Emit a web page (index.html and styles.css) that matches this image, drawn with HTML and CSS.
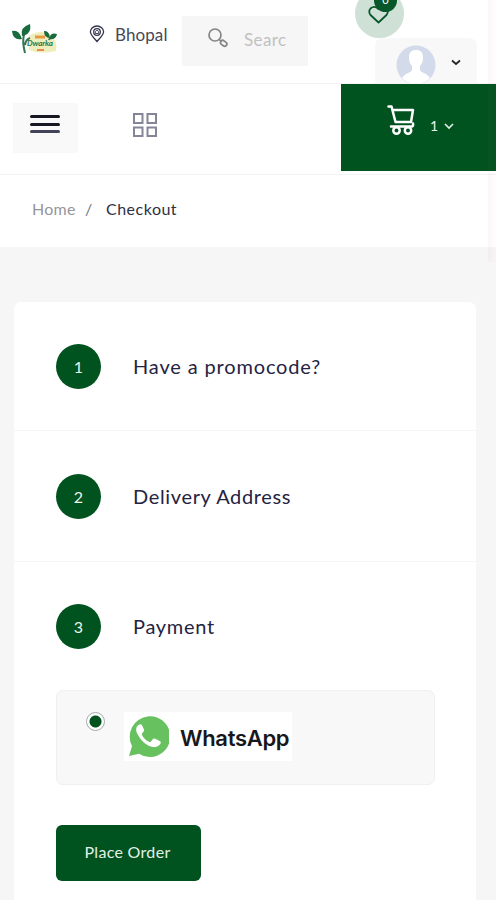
FILE: index.html
```
<!DOCTYPE html>
<html lang="en">
<head>
<meta charset="utf-8">
<meta name="viewport" content="width=device-width, initial-scale=1">
<title>Checkout</title>
<link rel="stylesheet" href="styles.css">
</head>
<body>
<header class="topbar">
  <a class="brand" href="#">
    <svg width="46" height="32" viewBox="0 0 46 32">
      <path d="M17 13 Q27 6 38 11 Q46 17 44 28 Q29 32 17 27Z" fill="#f0edbd"/>
      <path d="M13 30 Q10 18 12 12 M13 22 Q14 16 18 15 M37 17 Q39 12 42 12" fill="none" stroke="#347650" stroke-width="2"/>
      <path d="M0 8 Q7 6 10 16 Q1 18 0 8Z M10 13 Q8 4 18 1 Q20 11 10 13Z M32 8 Q37 7 38 15 Q32 15 32 8Z M38 16 Q38 9 45 11 Q44 17 38 16Z" fill="#176b3c"/>
      <path d="M23 14H33" stroke="#e39b43" stroke-width="3"/>
      <path d="M25 27H32" stroke="#e58b50" stroke-width="2"/>
      <text class="brand-text" x="15" y="23" textLength="26">Dwarka</text>
    </svg>
  </a>
  <div class="location">
    <svg width="16" height="18" viewBox="0 0 16 18" fill="none" stroke="#34344e" stroke-width="1.3"><path d="M8 16.5C5 13 1.400 10 1.400 6.800a6.600 5.800 0 0 1 13.200 0C14.600 10 11 13 8 16.500Z"/><circle cx="8" cy="7" r="3.300"/><path d="M6.400 8.500V6.400L8 5.200l1.600 1.200v2.100z" stroke-width=".9"/></svg>
    <span>Bhopal</span>
  </div>
  <div class="search">
    <svg width="20" height="20" viewBox="0 0 20 20" fill="none" stroke="#858585" stroke-width="1.7"><circle cx="7" cy="7" r="6"/><path d="M11 11.300l2.300 2.200"/><rect x="12.300" y="13.100" width="6.800" height="4.400" rx="2.200" transform="rotate(38 15.700 15.300)"/></svg>
    <span>Searc</span>
  </div>
  <div class="wish">
    <svg width="24" height="24" viewBox="0 0 24 24" fill="none" stroke="#07572a" stroke-width="1.800" stroke-linejoin="round"><path d="M11.500 21.500L3.500 14Q1 10.500 3.500 7.500Q7.500 4 11.500 8Q16 4 19.500 7.500Q22 10.500 19.500 14Z"/></svg>
    <span class="wish-count">0</span>
  </div>
  <div class="account">
    <svg width="40" height="40" viewBox="0 0 40 40"><circle cx="20" cy="20" r="19.500" fill="#d3dae9"/><path d="M20 5c-5 0-7.300 3-7 8 0 4 1.500 6 3 8v4c-1 3-7 3-10 8a19.500 19.500 0 0 0 28 0c-3-5-9-5-10-8v-4c1.500-2 3-4 3-8 .3-5-2-8-7-8Z" fill="#fff"/></svg>
    <svg width="10" height="7" viewBox="0 0 10 7" fill="none" stroke="#222" stroke-width="1.700"><path d="M1 1.500l4 3.500 4-3.500"/></svg>
  </div>
</header>
<nav class="navbar">
  <button class="menu" aria-label="Menu"><i></i><i></i><i></i></button>
  <svg class="apps" width="24" height="24" viewBox="0 0 24 24" fill="none" stroke="#85859a" stroke-width="2"><path d="M1 1h8.500v9H1zM14.500 1H23v9h-8.500zM1 14.500h8.500V23H1zM14.500 14.500H23V23h-8.500z"/></svg>
  <a class="cart" href="#">
    <svg width="28" height="32" viewBox="0 0 28 32" fill="none" stroke="#fff" stroke-width="2.500" stroke-linecap="round" stroke-linejoin="round"><path d="M1.500 1.500h3L8.500 17H24L26 5H5.500M4 21.500h21q1.500-.5 1-3"/><circle cx="9.500" cy="25.500" r="3.200"/><circle cx="21" cy="25.500" r="3.200"/></svg>
    <span>1</span>
    <svg class="cart-arrow" width="10" height="7" viewBox="0 0 10 7" fill="none" stroke="#dfeee4" stroke-width="1.700"><path d="M1 1l4 4 4-4"/></svg>
  </a>
</nav>
<div class="breadcrumb"><span class="home">Home</span><span class="slash">/</span><span class="current">Checkout</span></div>
<main>
  <section class="card">
    <div class="step first"><span class="number">1</span><h2 class="promo">Have a promocode?</h2></div>
    <div class="step"><span class="number">2</span><h2 class="delivery">Delivery Address</h2></div>
    <div class="step last"><span class="number">3</span><h2 class="payment">Payment</h2></div>
    <label class="method">
      <span class="radio"></span>
      <span class="whatsapp">
        <svg width="42" height="42" viewBox="0 0 42 42"><path d="M2 41l3-10A20.300 20.300 0 1 1 12 38.700Z" fill="#67c15e"/><path d="M11.500 10c-3 2-3 6-.5 10 4 7 9 11 15 12 4 .6 6-1 7.500-3.500.7-1.400.2-2-.8-2.600l-5-2.300c-1-.4-1.600 0-2.200.8l-1.500 2c-.6.700-1.200.700-2 .3-3.500-1.600-5.800-4.100-7-6.800-.4-.8-.2-1.300.4-1.900l1.300-1.500c.5-.6.600-1.100.3-1.900l-2-4.300c-.6-1.200-2-1.200-3.500-.3Z" fill="#fff"/></svg>
        <strong>WhatsApp</strong>
      </span>
    </label>
    <button class="place">Place Order</button>
  </section>
</main>
<div class="edge"></div>
</body>
</html>
```
FILE: styles.css
```
* { box-sizing: border-box; }
body { margin: 0; height: 900px; overflow: hidden; background: #f6f6f6; font-family: Lato, "Open Sans", sans-serif; color: #202033; }
svg { display: block; flex: none; }
button { border: 0; font: inherit; }
a { text-decoration: none; }
.topbar { display: flex; align-items: flex-start; height: 84px; overflow: hidden; background: #fff; border-bottom: 1px solid #f3f3f3; }
.brand { width: 78px; padding: 23px 0 0 12px; }
.brand-text { font: italic bold 8px Lato, sans-serif; fill: #26764a; }
.location { display: flex; width: 104px; padding: 25px 0 0 11px; gap: 10px; font-size: 17px; line-height: 20px; letter-spacing: .1px; color: #484856; }
.search { display: flex; width: 126px; height: 50px; margin-top: 16px; padding: 12px 0 0 26px; gap: 16px; background: #f6f6f6; color: #c1c1c1; font-size: 17px; line-height: 24px; letter-spacing: .4px; }
.wish { position: relative; flex: none; width: 49px; height: 49px; margin: -11px 0 0 47px; padding: 12px; border-radius: 50%; background: #cfe1d6; }
.wish-count { position: absolute; left: 19px; top: 0; width: 23px; height: 23px; border-radius: 50%; background: #07572a; color: #fff; font-size: 11px; line-height: 22px; text-align: center; }
.account { display: flex; flex: none; width: 102px; height: 50px; margin: 38px 0 0 -29px; padding: 7px 0 0 21px; gap: 15px; border-radius: 8px; background: #f8f8f9; }
.account svg + svg { margin-top: 14px; }
.navbar { display: flex; height: 91px; background: #fff; border-bottom: 1px solid #f2f2f2; }
.menu { display: flex; flex-direction: column; width: 65px; height: 50px; margin: 19px 0 0 13px; padding: 12px 17px; gap: 4px; background: #f9f9fa; }
.menu i { width: 30px; height: 3px; margin-bottom: .5px; border-radius: 2px; background: #171722; }
.menu i:last-child { background: #444459; }
.apps { margin: 29px 0 0 55px; }
.cart { display: flex; width: 155px; height: 87px; margin-left: auto; padding: 21px 0 0 46px; background: #00531f; color: #eaf4ed; font-size: 14px; }
.cart span { margin: 12px 0 0 15px; line-height: 18px; }
.cart-arrow { margin: 18px 0 0 6px; }
.breadcrumb { display: flex; height: 72px; padding: 23px 0 0 32px; background: #fff; font-size: 16px; line-height: 22px; }
.breadcrumb span { flex: none; }
.home { width: 53px; color: #96969c; letter-spacing: .25px; }
.slash { width: 21px; color: #777780; }
.current { color: #303041; letter-spacing: .5px; }
main { padding: 55px 20px 0 14px; }
.card { width: 462px; height: 610px; border-radius: 7px; background: #fff; }
.step { display: flex; align-items: center; height: 131px; padding-left: 42px; border-bottom: 1px solid #f5f5f5; }
.step.first { height: 129px; }
.step.last { height: 128px; border: 0; }
.number { flex: none; width: 45px; height: 45px; margin-right: 32px; border-radius: 50%; background: #00531f; color: #e9f4ed; font-size: 16px; line-height: 45px; text-align: center; }
h2 { margin: 0; font-size: 20px; line-height: 28px; font-weight: 400; color: #252342; }
.promo { letter-spacing: .85px; }
.delivery { letter-spacing: .65px; }
.payment { letter-spacing: .7px; }
.method { display: flex; width: 379px; height: 95px; margin-left: 42px; padding: 21px 0 0 29px; border: 1px solid #f0f0f0; border-radius: 7px; background: #f8f8f8; }
.radio { width: 19px; height: 19px; border: 1px solid #aaa; border-radius: 50%; background: radial-gradient(circle, #00531f 5.500px, #fff 6.500px); }
.whatsapp { display: flex; width: 168px; height: 49px; margin-left: 19px; padding: 3px 0 0 3px; gap: 11px; background: #fff; color: #17171c; }
.whatsapp strong { font-family: Inter, "Liberation Sans", sans-serif; font-weight: 600; font-size: 22px; line-height: 46px; letter-spacing: -.3px; }
.place { display: block; width: 145px; height: 56px; margin: 40px 0 0 42px; padding: 0 2px 4px 0; border-radius: 6px; background: #00531f; color: #e2f0e7; font-size: 16px; letter-spacing: .3px; }
.edge { position: fixed; right: 0; top: 0; width: 8px; height: 262px; background: linear-gradient(90deg, rgba(220, 80, 110, .045), rgba(220, 80, 110, .015)); }
```
